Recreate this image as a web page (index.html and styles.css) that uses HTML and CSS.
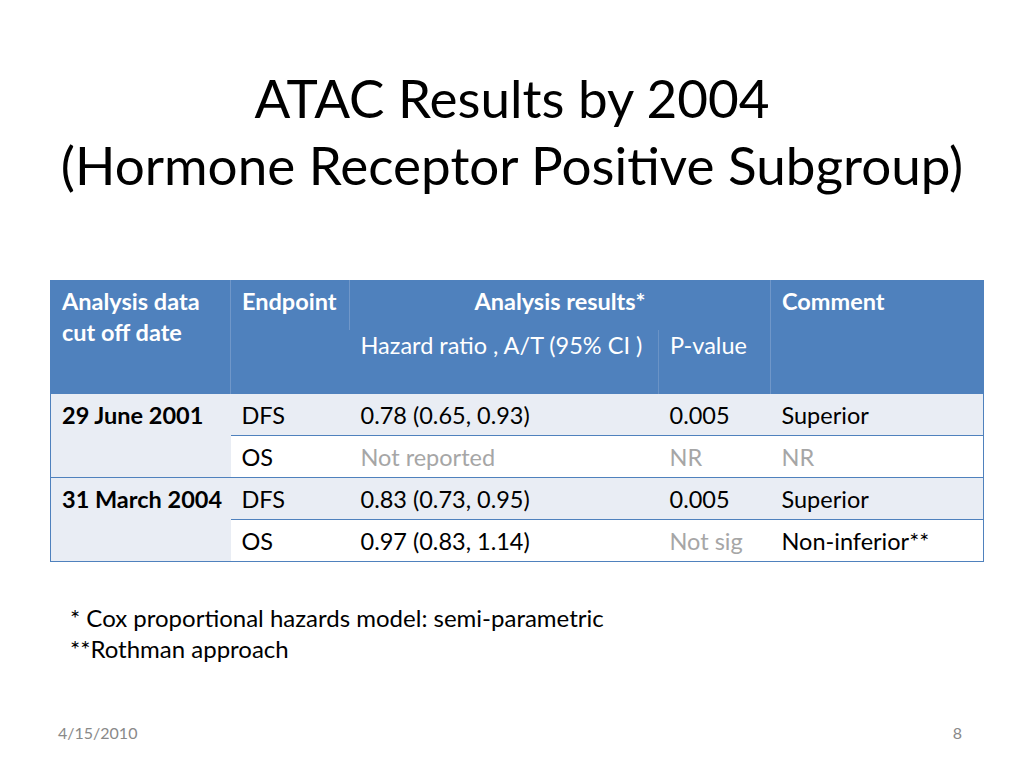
FILE: index.html
```html
<!DOCTYPE html>
<html>
<head>
<meta charset="utf-8">
<link rel="stylesheet" href="styles.css">
</head>
<body>
<div class="slide">
  <h1 class="title">ATAC Results by 2004<br>(Hormone Receptor Positive Subgroup)</h1>
  <table class="results">
    <colgroup>
      <col class="c1"><col class="c2"><col class="c3"><col class="c4"><col class="c5">
    </colgroup>
    <thead>
      <tr class="h1">
        <th rowspan="2" class="bold">Analysis data cut off date</th>
        <th rowspan="2" class="bold">Endpoint</th>
        <th colspan="2" class="bold center">Analysis results*</th>
        <th rowspan="2" class="bold">Comment</th>
      </tr>
      <tr class="h2">
        <th class="sub">Hazard ratio , A/T (95% CI )</th>
        <th class="sub">P-value</th>
      </tr>
    </thead>
    <tbody>
      <tr class="band">
        <td rowspan="2" class="date">29 June 2001</td>
        <td>DFS</td><td>0.78 (0.65, 0.93)</td><td>0.005</td><td>Superior</td>
      </tr>
      <tr class="plain">
        <td>OS</td><td class="muted">Not reported</td><td class="muted">NR</td><td class="muted">NR</td>
      </tr>
      <tr class="band">
        <td rowspan="2" class="date">31 March 2004</td>
        <td>DFS</td><td>0.83 (0.73, 0.95)</td><td>0.005</td><td>Superior</td>
      </tr>
      <tr class="plain">
        <td>OS</td><td>0.97 (0.83, 1.14)</td><td class="muted">Not sig</td><td>Non-inferior**</td>
      </tr>
    </tbody>
  </table>
  <div class="notes">
    <p>* Cox proportional hazards model: semi-parametric</p>
    <p>**Rothman approach</p>
  </div>
  <div class="footer">
    <span class="fdate">4/15/2010</span>
    <span class="fnum">8</span>
  </div>
</div>
</body>
</html>
```

FILE: styles.css
```css
html, body {
  margin: 0;
  padding: 0;
  background: #ffffff;
}

.slide {
  width: 1024px;
  height: 768px;
  display: flex;
  flex-direction: column;
  font-family: "Lato", "Open Sans", sans-serif;
  color: #000000;
  overflow: hidden;
}

.title {
  margin: 0;
  padding-top: 64px;
  font-weight: normal;
  font-size: 53px;
  line-height: 67px;
  text-align: center;
}

.results {
  margin: 82px 0 0 50px;
  width: 933px;
  border-collapse: collapse;
  table-layout: fixed;
  font-size: 23.5px;
  border: 1px solid #4f81bd;
}

.c1 { width: 180px; }
.c2 { width: 119px; }
.c3 { width: 309px; }
.c4 { width: 112px; }
.c5 { width: 213px; }

.results th,
.results td {
  box-sizing: border-box;
}

.results th {
  background: #4f81bd;
  color: #ffffff;
  text-align: left;
  vertical-align: top;
  padding: 5px 11px 0 11px;
  line-height: 31px;
  font-weight: normal;
  border-left: 1px solid #7097c9;
}

.results th:first-child { border-left: none; }

.results th.bold { font-weight: bold; }
.results th.center { text-align: center; }

.h1 th { height: 49px; }
.h2 th { height: 64px; padding-top: 0; }
.h2 th:first-child { border-left: none; }
.h2 th + th { border-left: 1px solid #6a93c6; }

.results td {
  padding: 1px 11px 0 11px;
  height: 42px;
  line-height: 40px;
  vertical-align: middle;
  border-top: 1px solid #4f81bd;
  white-space: nowrap;
}

.band td { background: #e9edf4; }
.plain td { background: #ffffff; }
.results td.date {
  background: #e9edf4;
  font-weight: bold;
  vertical-align: top;
}

.muted { color: #a6a6a6; }

.notes {
  margin: 40px 0 0 70px;
  font-size: 24px;
  line-height: 31px;
}

.notes p { margin: 0; }

.footer {
  margin-top: auto;
  display: flex;
  justify-content: space-between;
  padding: 0 62px 26px 58px;
  font-size: 16px;
  color: #898989;
}
```
